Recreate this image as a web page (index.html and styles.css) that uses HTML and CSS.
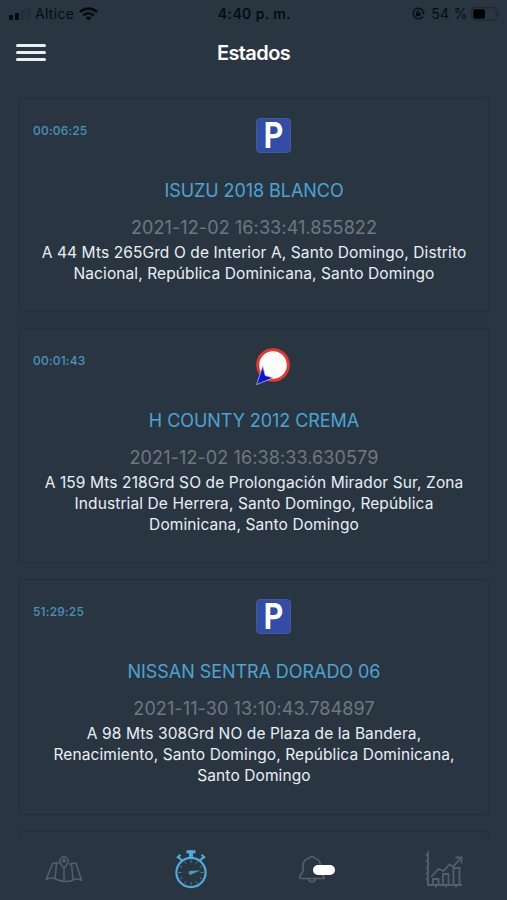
FILE: index.html
```html
<!DOCTYPE html>
<html lang="es">
<head>
    <meta charset="UTF-8">
    <meta name="viewport" content="width=device-width, initial-scale=1.0">
    <title>Estados</title>
    <link rel="stylesheet" href="styles.css">
</head>
<body>
    <div class="status-bar">
        <div class="status-left">
            <svg class="signal" width="22" height="14" viewBox="0 0 22 14">
                <rect x="0" y="8" width="4" height="5" rx="1" fill="#080b0e"/>
                <rect x="6" y="6" width="4" height="7" rx="1" fill="#080b0e"/>
                <rect x="12" y="3" width="4" height="10" rx="1" fill="#23303b"/>
                <rect x="17.500" y="1" width="4" height="12" rx="1" fill="#23303b"/>
            </svg>
            <span class="carrier">Altice</span>
            <svg class="wifi" width="19" height="14" viewBox="0 0 19 14" fill="none" stroke="#080b0e" stroke-width="2.600">
                <path d="M1 5.200C5.700 .4 13.300 .4 18 5.200"/>
                <path d="M4.200 8.500C7.200 5.500 11.800 5.500 14.800 8.500"/>
                <path d="M9.500 13.500L6.500 10.700C8.200 9.200 10.800 9.200 12.500 10.700Z" fill="#080b0e" stroke="none"/>
            </svg>
        </div>
        <span class="clock">4:40 p. m.</span>
        <div class="status-right">
            <svg width="13" height="13" viewBox="0 0 13 13" fill="none" stroke="#080b0e" stroke-width="1.300">
                <path d="M10.800 9.600A5.300 5.300 0 1 1 11.400 4.500"/>
                <path d="M9.600 5H13L11.500 7.800Z" fill="#080b0e" stroke="none"/>
                <rect x="3.800" y="5.800" width="4.600" height="3.500" rx=".5" fill="#080b0e" stroke="none"/>
                <path d="M4.800 6V4.800A1.300 1.300 0 0 1 7.400 4.800V6" stroke-width="1"/>
            </svg>
            <span class="percent">54 %</span>
            <svg width="29" height="14" viewBox="0 0 29 14">
                <rect x=".6" y=".6" width="24.800" height="12.800" rx="3.500" fill="none" stroke="#1b2631"/>
                <rect x="2.200" y="2.300" width="11.800" height="9.400" rx="1.800" fill="#000"/>
                <path d="M27 5V9.500Q28.600 9 28.600 7.200T27 5Z" fill="#1b2631"/>
            </svg>
        </div>
    </div>

    <header class="header">
        <button class="menu" aria-label="Menú"><span></span><span></span><span></span></button>
        <h1 class="title">Estados</h1>
    </header>

    <main class="list">
        <article class="card">
            <div class="card-top">
                <span class="time">00:06:25</span>
                <span class="parking"><b>P</b></span>
            </div>
            <h2 class="name">ISUZU 2018 BLANCO</h2>
            <p class="date">2021-12-02 16:33:41.855822</p>
            <p class="address">A 44 Mts 265Grd O de Interior A, Santo Domingo, Distrito<br>Nacional, República Dominicana, Santo Domingo</p>
        </article>

        <article class="card">
            <div class="card-top">
                <span class="time">00:01:43</span>
                <svg class="moving" width="36" height="38" viewBox="0 0 36 38">
                    <circle cx="17" cy="17" r="15.300" fill="#fff" stroke="#e5392f" stroke-width="3"/>
                    <path d="M6.800 18L9.200 27.600L17 29.800L.6 36.600Z" fill="#0a12dc" stroke="#c3cbdc" stroke-width=".7"/>
                </svg>
            </div>
            <h2 class="name">H COUNTY 2012 CREMA</h2>
            <p class="date">2021-12-02 16:38:33.630579</p>
            <p class="address">A 159 Mts 218Grd SO de Prolongación Mirador Sur, Zona<br>Industrial De Herrera, Santo Domingo, República<br>Dominicana, Santo Domingo</p>
        </article>

        <article class="card">
            <div class="card-top">
                <span class="time">51:29:25</span>
                <span class="parking"><b>P</b></span>
            </div>
            <h2 class="name">NISSAN SENTRA DORADO 06</h2>
            <p class="date">2021-11-30 13:10:43.784897</p>
            <p class="address">A 98 Mts 308Grd NO de Plaza de la Bandera,<br>Renacimiento, Santo Domingo, República Dominicana,<br>Santo Domingo</p>
        </article>

        <article class="card"></article>
    </main>

    <nav class="tabs">
        <a class="tab">
            <svg width="38" height="28" viewBox="0 0 38 28" fill="none" stroke="#53606b" stroke-width="1.500" stroke-linejoin="round">
                <path d="M15 7.500L7.500 8.500L1.200 24.500Q6 22 10.500 24Q15 26 19 26.500Q24 27 28 25Q32 23 36.500 25.300L31 8L24 9"/>
                <path d="M11.500 8.500L10 24M19 14.500V26.300M26.500 9L28 25"/>
                <path d="M19 13.500Q15 8.500 15 5.800A4 4 0 0 1 23 5.800Q23 8.500 19 13.500Z"/>
                <circle cx="19" cy="5.600" r="1.300"/>
            </svg>
        </a>
        <a class="tab">
            <svg width="34" height="40" viewBox="0 0 34 40" fill="none" stroke="#51a9dc" stroke-width="2.200">
                <circle cx="17" cy="23.500" r="14.600"/>
                <path d="M12.500 2.800H21.500" stroke-width="3.200"/>
                <path d="M17 3V9" stroke-width="4"/>
                <path d="M3.800 7.500L8 11.500M30.200 7.500L26 11.500"/>
                <path d="M3 9L6.500 5.800M31 9L27.500 5.800"/>
                <path d="M17 11V14M17 33V36M4.500 23.500H7.500M26.500 23.500H29.500M10.800 12.700L12 14.700M23.200 12.700L22 14.700M6.200 17.300L8.200 18.500M27.800 17.300L25.800 18.500M6.200 29.700L8.200 28.500M27.800 29.700L25.800 28.500M10.800 34.300L12 32.300M23.200 34.300L22 32.300" stroke="#3d87a7" stroke-width="1"/>
                <path d="M26.500 21.500L16.500 21.800A2 2 0 1 0 18.300 25Z" fill="#459bb7" stroke="none"/>
            </svg>
        </a>
        <a class="tab">
            <svg width="38" height="30" viewBox="0 0 38 30" fill="none" stroke="#53606b" stroke-width="1.600" stroke-linejoin="round">
                <path d="M12.200 3.500A2 2 0 0 1 15.800 3.500Q22.500 5.500 22.500 12V17L26.500 24.500H1.800V22L5 17.500V12Q5 5.500 12.200 3.500Z"/>
                <path d="M10.500 25A3.600 3.600 0 0 0 17.500 25"/>
            </svg>
            <span class="badge"></span>
        </a>
        <a class="tab">
            <svg width="38" height="38" viewBox="0 0 38 38" fill="none" stroke="#53606b" stroke-width="1.800">
                <path d="M3 1.500V35H37M.8 5H3M.8 11H3M.8 17.500H3M.8 23.500H3M.8 29.500H3M11 35V37.500M21 35V37.500M31 35V37.500"/>
                <path d="M8 35V29H13.500V35M18 35V24H23.500V35M28.500 35V18H34.500V35"/>
                <path d="M6 27L13.500 19L18.500 21L24.500 14.500L28 16.500L36 8"/>
                <path d="M30.500 7.500H36.500V13.500"/>
            </svg>
        </a>
    </nav>
</body>
</html>
```
FILE: styles.css
```css
* {
    box-sizing: border-box;
}

body {
    display: flex;
    flex-direction: column;
    height: 900px;
    margin: 0;
    overflow: hidden;
    background-color: #293642;
    font-family: Inter, sans-serif;
}

.status-bar {
    display: grid;
    grid-template-columns: 1fr auto 1fr;
    align-items: center;
    flex: none;
    height: 27px;
    padding: 0 7px 0 9px;
    font-size: 14px;
    color: #080b0e;
}

.status-left,
.status-right {
    display: flex;
    align-items: center;
}

.status-right {
    justify-content: flex-end;
    gap: 6px;
}

.carrier {
    margin: 0 5px 0 4px;
    letter-spacing: 0.3px;
}

.percent {
    margin-right: -3px;
    letter-spacing: 0.4px;
}

.clock {
    font-weight: 600;
    letter-spacing: 0.4px;
}

.header {
    display: grid;
    grid-template-columns: 1fr auto 1fr;
    align-items: center;
    flex: none;
    height: 51px;
    padding: 0 16px;
}

.menu {
    display: flex;
    flex-direction: column;
    gap: 4px;
    width: 30px;
    padding: 0;
    border: none;
    background: none;
}

.menu span {
    height: 3px;
    border-radius: 2px;
    background-color: #e9eff3;
}

.title {
    margin: 0;
    font-size: 20px;
    font-weight: 600;
    letter-spacing: -0.6px;
    color: #fff;
}

.list {
    display: flex;
    flex-direction: column;
    flex: 1;
    gap: 16px;
    min-height: 0;
    padding: 20px 18px 0 19px;
    overflow: hidden;
}

.card {
    flex: none;
    min-height: 214px;
    padding: 19px 13px 27.6px;
    border: 1px solid #23303b;
    border-radius: 4px;
    box-shadow: 0 0 2px #25313c;
    text-align: center;
}

.card-top {
    display: grid;
    grid-template-columns: 223px 1fr;
    height: 36px;
}

.time {
    padding-top: 5px;
    font-size: 12px;
    font-weight: 500;
    line-height: 16px;
    letter-spacing: 0.2px;
    text-align: left;
    color: #4794be;
}

.parking {
    width: 35px;
    height: 35px;
    border: 1px solid #46579a;
    border-radius: 4px;
    background-color: #314da5;
    font-family: Roboto, sans-serif;
    font-size: 36px;
    line-height: 34px;
    color: #fff;
}

.parking b {
    display: inline-block;
    font-weight: 700;
    transform: scaleX(0.84);
}

.name {
    margin: 24.6px 0 0;
    font-size: 18px;
    font-weight: 400;
    line-height: 24px;
    letter-spacing: -0.06px;
    color: #4ba4d3;
}

.date {
    margin: 13px 0 0;
    font-size: 18px;
    line-height: 24px;
    letter-spacing: 0.1px;
    color: #71777e;
}

.address {
    margin: 2px 0 0;
    font-size: 15.5px;
    line-height: 21px;
    letter-spacing: 0.1px;
    white-space: nowrap;
    color: #e9eff4;
}

.tabs {
    display: grid;
    grid-template-columns: repeat(4, 1fr);
    flex: none;
    height: 61px;
}

.tab {
    position: relative;
    display: flex;
    justify-content: center;
    align-items: center;
}

.tab svg {
    margin: -1px 0 1px 1px;
}

/* unread marker lies over the bell */
.badge {
    position: absolute;
    top: 26px;
    left: 59px;
    width: 22px;
    height: 10px;
    border-radius: 5px;
    background-color: #fff;
}
```
